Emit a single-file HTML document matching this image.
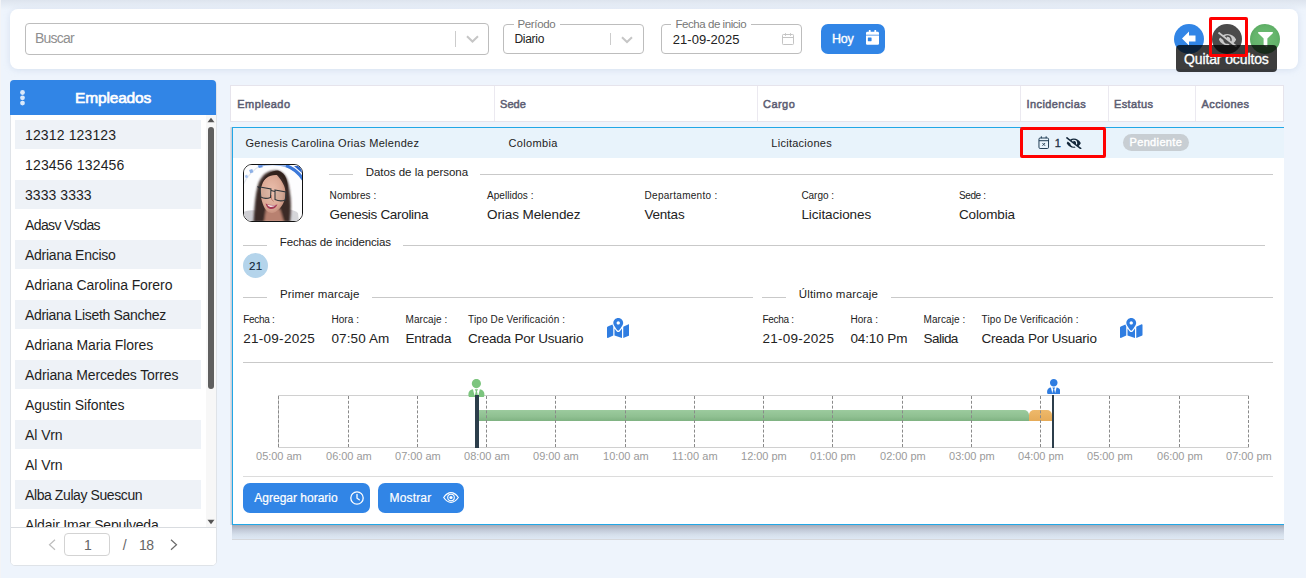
<!DOCTYPE html>
<html lang="es">
<head>
<meta charset="utf-8">
<title>Incidencias</title>
<style>
*{box-sizing:border-box;margin:0;padding:0}
html,body{width:1306px;height:578px;overflow:hidden}
body{position:relative;background:#eef4fc;font-family:"Liberation Sans",sans-serif;color:#222;font-size:13px}
.a{position:absolute}
.t{position:absolute;white-space:nowrap;line-height:1}
.inp{border:1px solid #bdbdbd;border-radius:4px;background:#fff}
.li{position:absolute;left:15px;width:186px;height:29px;background:#eef2f7}
.vsep{position:absolute;top:86px;width:1px;height:35px;background:#ebe9f0}
.hl{position:absolute;height:1px;background:#c9c9c9}
.hr{position:absolute;top:396px;width:0;height:51px;border-left:1px dashed #8a8a8a}
.btn{position:absolute;top:483px;height:30px;background:#3185e6;border-radius:7px}
</style>
</head>
<body>
<div class="a" style="left:0;top:0;width:1306px;height:10px;background:linear-gradient(#dde4ee,#eef4fc)"></div>
<div class="a" style="left:0;top:0;width:1px;height:578px;background:#f3f4f7"></div>
<div class="a" style="left:10px;top:9px;width:1288px;height:60px;background:#fff;border-radius:8px;box-shadow:0 1px 6px rgba(170,190,220,.35)"></div>
<div class="a inp" style="left:25px;top:23px;width:464px;height:32px"></div>
<div class="t" style="left:35.0px;top:30.9px;font-size:14px;color:#8f8f8f;letter-spacing:-0.78px;">Buscar</div>
<div class="a" style="left:455px;top:31px;width:1px;height:16px;background:#ccc"></div>
<svg class="a" style="left:466px;top:35px" width="13" height="8" viewBox="0 0 13 8"><path d="M1 1.200 L6.500 6.500 L12 1.200" fill="none" stroke="#c6c6c6" stroke-width="2"/></svg>
<div class="a inp" style="left:503px;top:24px;width:141px;height:30px"></div>
<div class="a" style="left:514px;top:23px;width:46px;height:3px;background:#fff"></div>
<div class="t" style="left:517.5px;top:18.5px;font-size:11.5px;color:#777;letter-spacing:-0.35px;">Período</div>
<div class="t" style="left:514.5px;top:33.1px;font-size:12px;color:#222;letter-spacing:-0.30px;">Diario</div>
<div class="a" style="left:610px;top:33px;width:1px;height:12px;background:#ccc"></div>
<svg class="a" style="left:621px;top:36px" width="12" height="8" viewBox="0 0 12 8"><path d="M1 1.200 L6 6 L11 1.200" fill="none" stroke="#c6c6c6" stroke-width="2"/></svg>
<div class="a inp" style="left:661px;top:24px;width:141px;height:30px"></div>
<div class="a" style="left:671px;top:23px;width:80px;height:3px;background:#fff"></div>
<div class="t" style="left:675.5px;top:18.5px;font-size:11.5px;color:#777;letter-spacing:-0.45px;">Fecha de inicio</div>
<div class="t" style="left:672.8px;top:32.6px;font-size:13px;color:#222;letter-spacing:0.02px;">21-09-2025</div>
<svg class="a" style="left:781px;top:32px" width="14" height="14" viewBox="0 0 14 14"><rect x="1.500" y="2.500" width="11" height="10" rx=".8" fill="none" stroke="#c4c4c4" stroke-width="1"/><path d="M1.500 5.500H12.500M4.500 1.200V3.800M9.500 1.200V3.800" stroke="#c4c4c4" stroke-width="1" fill="none"/></svg>
<div class="a" style="left:821px;top:24px;width:64px;height:30px;background:#3185e6;border-radius:7px"></div>
<div class="t" style="left:832.0px;top:32.9px;font-size:12.5px;color:#fff;letter-spacing:-0.29px;-webkit-text-stroke:.35px #fff;">Hoy</div>
<svg class="a" style="left:866px;top:30.300px" width="13" height="14.860" viewBox="0 0 448 512"><path d="M0 464c0 26.500 21.500 48 48 48h352c26.500 0 48-21.500 48-48V192H0v272zm64-192c0-8.800 7.200-16 16-16h96c8.800 0 16 7.200 16 16v96c0 8.800-7.200 16-16 16H80c-8.800 0-16-7.200-16-16v-96zM400 64h-48V16c0-8.800-7.200-16-16-16h-32c-8.800 0-16 7.200-16 16v48H160V16c0-8.800-7.200-16-16-16h-32c-8.800 0-16 7.200-16 16v48H48C21.500 64 0 85.500 0 112v48h448v-48c0-26.500-21.500-48-48-48z" fill="#fff"/></svg>
<div class="a" style="left:1174px;top:24px;width:30px;height:30px;border-radius:50%;background:#3185e6"></div>
<div class="a" style="left:1212px;top:24px;width:30px;height:30px;border-radius:50%;background:#4b4b4b"></div>
<div class="a" style="left:1250px;top:24px;width:30px;height:30px;border-radius:50%;background:radial-gradient(circle at 50% 50%,#6ebd74 0,#64b46b 55%,#4f9f58 100%)"></div>
<svg class="a" style="left:1182px;top:31px" width="14" height="15" viewBox="0 0 14 15"><path d="M0 7.500 L7 0.500 V4.500 H13.500 V10.500 H7 V14.500 Z" fill="#fff"/></svg>
<svg class="a" style="left:1217.500px;top:31.500px" width="19" height="15.200" viewBox="0 0 640 512"><path d="M320 400c-75.850 0-137.250-58.710-142.900-133.110L72.200 185.820c-13.790 17.300-26.480 35.590-36.720 55.590a32.350 32.350 0 0 0 0 29.190C89.710 376.410 197.070 448 320 448c26.910 0 52.870-4 77.890-10.460L346 397.390a144.130 144.130 0 0 1-26 2.610zm313.820 58.100l-110.550-85.440a331.250 331.250 0 0 0 81.250-102.070 32.350 32.350 0 0 0 0-29.190C550.290 135.590 442.930 64 320 64a308.150 308.150 0 0 0-147.320 37.700L45.460 3.370A16 16 0 0 0 23 6.180L3.370 31.450A16 16 0 0 0 6.180 53.900l588.360 454.730a16 16 0 0 0 22.460-2.810l19.640-25.270a16 16 0 0 0-2.820-22.450zm-183.720-142l-39.300-30.380A94.750 94.750 0 0 0 416 256a94.760 94.760 0 0 0-121.310-92.210A47.650 47.650 0 0 1 304 192a46.640 46.640 0 0 1-1.540 10l-73.610-56.890A142.310 142.310 0 0 1 320 112a143.920 143.920 0 0 1 144 144c0 21.630-5.290 41.790-13.900 60.110z" fill="#c9c9c9"/></svg>
<svg class="a" style="left:1257.500px;top:32px" width="15" height="15" viewBox="0 0 512 512"><path d="M487.976 0H24.028C2.710 0-8.047 25.866 7.058 40.971L192 225.941V432c0 7.831 3.821 15.170 10.237 19.662l80 55.980C298.020 518.690 320 507.493 320 487.980V225.941l184.947-184.970C520.021 25.896 509.338 0 487.976 0z" fill="#fff"/></svg>
<div class="a" style="left:10px;top:80px;width:207px;height:486px;background:#fff;border:1px solid #dfe3e8;border-radius:5px"></div>
<div class="a" style="left:206px;top:115px;width:10px;height:412px;background:#f7f7f7"></div>
<div class="a" style="left:10px;top:80px;width:206px;height:35px;background:#3185e6;border-radius:4px 4px 0 0"></div>
<div class="t" style="left:75.0px;top:90.2px;font-size:15.5px;color:#fff;letter-spacing:-0.16px;-webkit-text-stroke:.65px #fff;">Empleados</div>
<div class="li" style="top:120px"></div>
<div class="t" style="left:25.0px;top:128.3px;font-size:14px;color:#1f1f1f;letter-spacing:0.14px;">12312 123123</div>
<div class="t" style="left:25.0px;top:158.3px;font-size:14px;color:#1f1f1f;letter-spacing:0.17px;">123456 132456</div>
<div class="li" style="top:180px"></div>
<div class="t" style="left:25.0px;top:188.3px;font-size:14px;color:#1f1f1f;letter-spacing:0.06px;">3333 3333</div>
<div class="t" style="left:25.0px;top:218.3px;font-size:14px;color:#1f1f1f;letter-spacing:-0.61px;">Adasv Vsdas</div>
<div class="li" style="top:240px"></div>
<div class="t" style="left:25.0px;top:248.3px;font-size:14px;color:#1f1f1f;letter-spacing:-0.26px;">Adriana Enciso</div>
<div class="t" style="left:25.0px;top:278.3px;font-size:14px;color:#1f1f1f;letter-spacing:-0.09px;">Adriana Carolina Forero</div>
<div class="li" style="top:300px"></div>
<div class="t" style="left:25.0px;top:308.3px;font-size:14px;color:#1f1f1f;letter-spacing:-0.32px;">Adriana Liseth Sanchez</div>
<div class="t" style="left:25.0px;top:338.3px;font-size:14px;color:#1f1f1f;letter-spacing:-0.09px;">Adriana Maria Flores</div>
<div class="li" style="top:360px"></div>
<div class="t" style="left:25.0px;top:368.3px;font-size:14px;color:#1f1f1f;letter-spacing:-0.12px;">Adriana Mercedes Torres</div>
<div class="t" style="left:25.0px;top:398.3px;font-size:14px;color:#1f1f1f;letter-spacing:-0.11px;">Agustin Sifontes</div>
<div class="li" style="top:420px"></div>
<div class="t" style="left:25.0px;top:428.3px;font-size:14px;color:#1f1f1f;letter-spacing:-0.00px;">Al Vrn</div>
<div class="t" style="left:25.0px;top:458.3px;font-size:14px;color:#1f1f1f;letter-spacing:-0.00px;">Al Vrn</div>
<div class="li" style="top:480px"></div>
<div class="t" style="left:25.0px;top:488.3px;font-size:14px;color:#1f1f1f;letter-spacing:-0.41px;">Alba Zulay Suescun</div>
<div class="t" style="left:25.0px;top:518.3px;font-size:14px;color:#1f1f1f;letter-spacing:-0.20px;">Aldair Imar Sepulveda</div>
<div class="a" style="left:11px;top:527px;width:205px;height:38px;background:#fff;border-radius:0 0 4px 4px"></div>
<div class="a" style="left:11px;top:527px;width:205px;height:1px;background:#d9dce0"></div>
<svg class="a" style="left:19px;top:89.600px" width="7" height="16" viewBox="0 0 7 16"><circle cx="3.500" cy="2.500" r="2.400" fill="#dbe9fa"/><circle cx="3.500" cy="7.800" r="2.400" fill="#dbe9fa"/><circle cx="3.500" cy="13.100" r="2.400" fill="#dbe9fa"/></svg>
<svg class="a" style="left:207px;top:117px" width="8" height="6" viewBox="0 0 8 6"><path d="M4 .8 L7.500 5.200 H.5Z" fill="#555"/></svg>
<div class="a" style="left:208px;top:127px;width:6px;height:262px;border-radius:3px;background:#5f5f5f"></div>
<svg class="a" style="left:207px;top:519px" width="8" height="6" viewBox="0 0 8 6"><path d="M4 5.200 L7.500 .8 H.5Z" fill="#555"/></svg>
<svg class="a" style="left:48px;top:539px" width="8" height="12" viewBox="0 0 8 12"><path d="M7 .8 L1.500 5.800 L7 10.800" fill="none" stroke="#bdbdbd" stroke-width="1.200"/></svg>
<div class="a" style="left:64px;top:533px;width:46px;height:23px;border:1px solid #d3d3d3;border-radius:4px;background:#fff"></div>
<div class="t" style="left:84.0px;top:538.2px;font-size:14px;color:#666;letter-spacing:-1.30px;">1</div>
<div class="t" style="left:122.7px;top:538.2px;font-size:14px;color:#666;letter-spacing:1.41px;">/</div>
<div class="t" style="left:139.0px;top:538.2px;font-size:14px;color:#666;letter-spacing:-0.65px;">18</div>
<svg class="a" style="left:170px;top:539px" width="8" height="12" viewBox="0 0 8 12"><path d="M1 .8 L6.500 5.800 L1 10.800" fill="none" stroke="#6a6a6a" stroke-width="1.200"/></svg>
<div class="a" style="left:230px;top:127px;width:2px;height:398px;background:linear-gradient(90deg,#e3e8f0,#c3c8d2)"></div><div class="a" style="left:232px;top:525px;width:1052px;height:14px;background:linear-gradient(#a5abb8 0,#c2cad8 35%,#d6e0ec 70%,#dee8f4 100%)"></div><div class="a" style="left:232px;top:539px;width:1052px;height:1px;background:#d6d8dc"></div><div class="a" style="left:232px;top:127px;width:1052px;height:398px;background:#fff;border:1px solid #22a7e6;border-right:none"></div>
<div class="a" style="left:230px;top:85px;width:1054px;height:37px;background:#fff;border:1px solid #e6e4ec"></div>
<div class="vsep" style="left:494px"></div>
<div class="vsep" style="left:757px"></div>
<div class="vsep" style="left:1020px"></div>
<div class="vsep" style="left:1108px"></div>
<div class="vsep" style="left:1195px"></div>
<div class="t" style="left:237.2px;top:98.7px;font-size:11px;color:#5c5d72;letter-spacing:0.47px;-webkit-text-stroke:.5px #5c5d72;">Empleado</div>
<div class="t" style="left:500.0px;top:98.7px;font-size:11px;color:#5c5d72;letter-spacing:0.08px;-webkit-text-stroke:.5px #5c5d72;">Sede</div>
<div class="t" style="left:763.0px;top:98.7px;font-size:11px;color:#5c5d72;letter-spacing:0.45px;-webkit-text-stroke:.5px #5c5d72;">Cargo</div>
<div class="t" style="left:1026.5px;top:98.7px;font-size:11px;color:#5c5d72;letter-spacing:0.42px;-webkit-text-stroke:.5px #5c5d72;">Incidencias</div>
<div class="t" style="left:1114.0px;top:98.7px;font-size:11px;color:#5c5d72;letter-spacing:0.37px;-webkit-text-stroke:.5px #5c5d72;">Estatus</div>
<div class="t" style="left:1201.5px;top:98.7px;font-size:11px;color:#5c5d72;letter-spacing:0.42px;-webkit-text-stroke:.5px #5c5d72;">Acciones</div>
<div class="a" style="left:233px;top:128px;width:1051px;height:30px;background:#e8f3fb"></div>
<div class="t" style="left:245.5px;top:137.8px;font-size:11px;color:#222;letter-spacing:0.30px;">Genesis Carolina Orias Melendez</div>
<div class="t" style="left:508.5px;top:137.8px;font-size:11px;color:#222;letter-spacing:0.34px;">Colombia</div>
<div class="t" style="left:771.3px;top:137.8px;font-size:11px;color:#222;letter-spacing:0.27px;">Licitaciones</div>
<div class="t" style="left:1054.8px;top:137.8px;font-size:11px;color:#1c3144;letter-spacing:-0.42px;-webkit-text-stroke:.3px #1c3144;">1</div>
<div class="a" style="left:1123px;top:134px;width:66px;height:17px;border-radius:9px;background:#c8ced3"></div>
<div class="t" style="left:1129.5px;top:137.4px;font-size:11px;color:#fff;letter-spacing:0.35px;-webkit-text-stroke:.4px #fff;">Pendiente</div>
<div class="a" id="avatar" style="left:243px;top:164px;width:60px;height:58px;border:1px solid #111;border-radius:9px;background:#fff;overflow:hidden">
<svg width="58" height="56" viewBox="0 0 58 56" style="position:absolute;left:0;top:0">
<defs><filter id="bl" x="-10%" y="-10%" width="120%" height="120%"><feGaussianBlur stdDeviation=".55"/></filter>
<filter id="bl2" x="-10%" y="-10%" width="120%" height="120%"><feGaussianBlur stdDeviation=".9"/></filter>
<radialGradient id="skin" cx=".45" cy=".45" r=".6"><stop offset="0" stop-color="#ebc0ae"/><stop offset=".7" stop-color="#dca995"/><stop offset="1" stop-color="#bd8775"/></radialGradient></defs>
<rect width="58" height="56" fill="#fdfdfe"/>
<g filter="url(#bl)">
<path d="M-4 30 A44 44 0 0 1 40 -6" fill="none" stroke="#e3e8f0" stroke-width="1.200"/>
<path d="M14 1 Q30 -3.500 44 1.500 Q54 5.500 59 14" fill="none" stroke="#9bb9ea" stroke-width="2.600"/>
<path d="M42 .5 Q53 4.500 59.500 15" fill="none" stroke="#3a78da" stroke-width="3"/>
<path d="M50 1 L58 8 L58 1Z" fill="#2a63c8"/>
<rect x="5.500" y="4.500" width="3.400" height="3.400" fill="#8db0e6" transform="rotate(-20 7 6)"/>
<rect x="1.200" y="10" width="2.600" height="2.800" fill="#a9c4ee" transform="rotate(-25 2.500 11.500)"/>
<rect x="14.500" y=".5" width="4" height="2.200" fill="#5f8fe0" transform="rotate(-10 16 1.500)"/>
<path d="M-1 47 Q5 44.500 12 45.500 L13 57 L-1 57Z" fill="#cfcfd4"/>
<path d="M44 44.500 Q50 44.500 54 48 L55 57 L43 57Z" fill="#d6d6da"/>
</g>
<g filter="url(#bl2)">
<path d="M33 5.500 C24 4.500 17 10 14 20 C11 30 10.500 44 9.500 57 L46 57 C47 46 47.500 36 45.500 25 C44 14 41 7 33 5.500Z" fill="#3b2a26"/>
<path d="M20 57 L22 44 L36 44 L40 57Z" fill="#b88170"/>
</g>
<g filter="url(#bl)">
<path d="M18 20 C20.500 11 27 8.500 33 10 C38 16 41.500 21 41.500 28 C41.500 36 38 43 31.500 47 C28 49 24.500 48 22 45 C18.500 40.500 16.500 32 16.500 26 C16.500 23 17.500 21 18.500 19Z" fill="url(#skin)"/>
<path d="M34 5.500 C27 5.500 20 10 17 21 C20 13 26 9.300 33 10 C39.500 11 42 18 43 28 C45 18 42 7.500 34 5.500Z" fill="#33231f"/>
<path d="M16 22 L27 24 L26.500 32.500 Q21 34.500 16.800 32Z" fill="#7f908e" fill-opacity=".12" stroke="#2f363a" stroke-width="1.050"/>
<path d="M31 25 L42 27 L41.500 35 Q36 37 31 34.500Z" fill="#7f908e" fill-opacity=".12" stroke="#2f363a" stroke-width="1.050"/>
<path d="M27 25.500 L31 26.500" stroke="#2f363a" stroke-width="1.100" fill="none"/>
<path d="M13.500 21.500 L16.500 23.500" stroke="#262b30" stroke-width="1.200" fill="none"/>
<path d="M27.500 30 Q26.500 35 29.500 36.500" fill="none" stroke="#b57b6b" stroke-width=".9"/>
<path d="M21.500 38.500 Q27 41 33.500 39.500 Q31 44.500 26.500 44 Q23 43.500 21.500 38.500Z" fill="#a43a55"/>
<path d="M23 39.500 Q27.500 41 32 40.200 Q29.500 42.200 26.500 42 Q24.500 41.600 23 39.500Z" fill="#f2e9e8"/>
</g>
</svg></div>
<div class="hl" style="left:329px;top:174px;width:24px"></div>
<div class="t" style="left:365.7px;top:166.6px;font-size:11.5px;color:#222;letter-spacing:-0.03px;">Datos de la persona</div>
<div class="hl" style="left:480px;top:174px;width:793px"></div>
<div class="t" style="left:329.6px;top:190.6px;font-size:10px;color:#222;letter-spacing:0.07px;">Nombres :</div>
<div class="t" style="left:329.6px;top:208.3px;font-size:13.5px;color:#222;letter-spacing:-0.31px;">Genesis Carolina</div>
<div class="t" style="left:487.0px;top:190.6px;font-size:10px;color:#222;letter-spacing:0.03px;">Apellidos :</div>
<div class="t" style="left:487.0px;top:208.3px;font-size:13.5px;color:#222;letter-spacing:-0.08px;">Orias Melendez</div>
<div class="t" style="left:644.6px;top:190.6px;font-size:10px;color:#222;letter-spacing:0.28px;">Departamento :</div>
<div class="t" style="left:644.6px;top:208.3px;font-size:13.5px;color:#222;letter-spacing:-0.25px;">Ventas</div>
<div class="t" style="left:801.4px;top:190.6px;font-size:10px;color:#222;letter-spacing:-0.03px;">Cargo :</div>
<div class="t" style="left:801.4px;top:208.3px;font-size:13.5px;color:#222;letter-spacing:-0.06px;">Licitaciones</div>
<div class="t" style="left:959.0px;top:190.6px;font-size:10px;color:#222;letter-spacing:-0.39px;">Sede :</div>
<div class="t" style="left:959.0px;top:208.3px;font-size:13.5px;color:#222;letter-spacing:-0.14px;">Colombia</div>
<div class="hl" style="left:243px;top:245px;width:24px"></div>
<div class="t" style="left:279.8px;top:237.4px;font-size:11.5px;color:#222;letter-spacing:-0.13px;">Fechas de incidencias</div>
<div class="hl" style="left:403px;top:245px;width:862px"></div>
<div class="a" style="left:243px;top:253px;width:25px;height:25px;border-radius:50%;background:#b4d4eb"></div>
<div class="t" style="left:248.9px;top:260.5px;font-size:11.5px;color:#12273b;letter-spacing:0.40px;-webkit-text-stroke:.15px #12273b;">21</div>
<div class="hl" style="left:243px;top:297px;width:24px"></div>
<div class="t" style="left:280.0px;top:289.2px;font-size:11.5px;color:#222;letter-spacing:0.11px;">Primer marcaje</div>
<div class="hl" style="left:372px;top:297px;width:381px"></div>
<div class="t" style="left:243.3px;top:315.1px;font-size:10px;color:#222;letter-spacing:-0.32px;">Fecha :</div>
<div class="t" style="left:243.3px;top:331.8px;font-size:13.5px;color:#222;letter-spacing:0.26px;">21-09-2025</div>
<div class="t" style="left:331.4px;top:315.1px;font-size:10px;color:#222;letter-spacing:0.07px;">Hora :</div>
<div class="t" style="left:331.4px;top:331.8px;font-size:13.5px;color:#222;letter-spacing:0.13px;">07:50 Am</div>
<div class="t" style="left:405.5px;top:315.1px;font-size:10px;color:#222;letter-spacing:0.08px;">Marcaje :</div>
<div class="t" style="left:405.5px;top:331.8px;font-size:13.5px;color:#222;letter-spacing:-0.23px;">Entrada</div>
<div class="t" style="left:468.0px;top:315.1px;font-size:10px;color:#222;letter-spacing:0.14px;">Tipo De Verificación :</div>
<div class="t" style="left:468.0px;top:331.8px;font-size:13.5px;color:#222;letter-spacing:-0.23px;">Creada Por Usuario</div>
<div class="hl" style="left:762px;top:297px;width:24px"></div>
<div class="t" style="left:798.7px;top:289.2px;font-size:11.5px;color:#222;letter-spacing:0.20px;">Último marcaje</div>
<div class="hl" style="left:891px;top:297px;width:382px"></div>
<div class="t" style="left:762.5px;top:315.1px;font-size:10px;color:#222;letter-spacing:-0.32px;">Fecha :</div>
<div class="t" style="left:762.5px;top:331.8px;font-size:13.5px;color:#222;letter-spacing:0.26px;">21-09-2025</div>
<div class="t" style="left:850.4px;top:315.1px;font-size:10px;color:#222;letter-spacing:0.07px;">Hora :</div>
<div class="t" style="left:850.4px;top:331.8px;font-size:13.5px;color:#222;letter-spacing:-0.11px;">04:10 Pm</div>
<div class="t" style="left:923.5px;top:315.1px;font-size:10px;color:#222;letter-spacing:0.08px;">Marcaje :</div>
<div class="t" style="left:923.5px;top:331.8px;font-size:13.5px;color:#222;letter-spacing:-0.53px;">Salida</div>
<div class="t" style="left:981.5px;top:315.1px;font-size:10px;color:#222;letter-spacing:0.14px;">Tipo De Verificación :</div>
<div class="t" style="left:981.5px;top:331.8px;font-size:13.5px;color:#222;letter-spacing:-0.23px;">Creada Por Usuario</div>
<div class="hl" style="left:243px;top:362px;width:1030px"></div>
<svg class="a" style="left:606.500px;top:318.100px" width="22.500" height="20" viewBox="0 0 576 512"><path d="M288 0c-69.590 0-126 56.410-126 126 0 56.260 82.350 158.800 113.900 196.020 6.390 7.540 17.820 7.540 24.200 0C331.650 284.800 414 182.260 414 126 414 56.410 357.590 0 288 0zm0 168c-23.200 0-42-18.800-42-42s18.800-42 42-42 42 18.800 42 42-18.800 42-42 42zM20.120 215.950A32.006 32.006 0 0 0 0 245.660v250.320c0 11.320 11.430 19.060 21.940 14.860L160 448V214.920c-8.840-15.980-16.070-31.540-21.250-46.420L20.120 215.950zM288 359.670c-14.070 0-27.380-6.180-36.510-16.960-19.660-23.200-40.570-49.620-59.490-76.720v182l192 64V266c-18.920 27.090-39.820 53.520-59.490 76.720-9.130 10.770-22.440 16.950-36.510 16.950zm266.060-198.510L416 224v288l139.880-55.950A31.996 31.996 0 0 0 576 426.340V176.020c0-11.320-11.430-19.060-21.940-14.860z" fill="#2f7de1"/></svg>
<svg class="a" style="left:1120px;top:318.100px" width="22.500" height="20" viewBox="0 0 576 512"><path d="M288 0c-69.590 0-126 56.410-126 126 0 56.260 82.350 158.800 113.900 196.020 6.390 7.540 17.820 7.540 24.200 0C331.650 284.800 414 182.260 414 126 414 56.410 357.590 0 288 0zm0 168c-23.200 0-42-18.800-42-42s18.800-42 42-42 42 18.800 42 42-18.800 42-42 42zM20.120 215.950A32.006 32.006 0 0 0 0 245.660v250.320c0 11.320 11.430 19.060 21.940 14.860L160 448V214.920c-8.840-15.980-16.070-31.540-21.250-46.420L20.120 215.950zM288 359.670c-14.070 0-27.380-6.180-36.510-16.960-19.660-23.200-40.570-49.620-59.490-76.720v182l192 64V266c-18.920 27.090-39.820 53.520-59.490 76.720-9.130 10.770-22.440 16.950-36.510 16.950zm266.060-198.510L416 224v288l139.880-55.950A31.996 31.996 0 0 0 576 426.340V176.020c0-11.320-11.430-19.060-21.940-14.860z" fill="#2f7de1"/></svg>
<div class="a" style="left:278px;top:395px;width:971px;height:53px;border:1px solid #d0d0d0;border-right:none"></div>
<div class="a" style="left:479px;top:410px;width:550px;height:11px;background:linear-gradient(#9ccb9e,#8fc091 60%,#7fb282);border-radius:0 5px 0 0"></div>
<div class="a" style="left:1029px;top:410px;width:23px;height:11px;background:linear-gradient(#eeb96b,#e6ab58);border-radius:5px 5px 0 0"></div>
<div class="hr" style="left:278px"></div>
<div class="t" style="left:256.1px;top:450.6px;font-size:11px;color:#9a9a9a;letter-spacing:-0.05px;">05:00 am</div>
<div class="hr" style="left:348px"></div>
<div class="t" style="left:326.1px;top:450.6px;font-size:11px;color:#9a9a9a;letter-spacing:-0.05px;">06:00 am</div>
<div class="hr" style="left:417px"></div>
<div class="t" style="left:395.1px;top:450.6px;font-size:11px;color:#9a9a9a;letter-spacing:-0.05px;">07:00 am</div>
<div class="hr" style="left:486px"></div>
<div class="t" style="left:464.1px;top:450.6px;font-size:11px;color:#9a9a9a;letter-spacing:-0.05px;">08:00 am</div>
<div class="hr" style="left:555px"></div>
<div class="t" style="left:533.1px;top:450.6px;font-size:11px;color:#9a9a9a;letter-spacing:-0.05px;">09:00 am</div>
<div class="hr" style="left:625px"></div>
<div class="t" style="left:603.1px;top:450.6px;font-size:11px;color:#9a9a9a;letter-spacing:-0.05px;">10:00 am</div>
<div class="hr" style="left:694px"></div>
<div class="t" style="left:672.1px;top:450.6px;font-size:11px;color:#9a9a9a;letter-spacing:0.06px;">11:00 am</div>
<div class="hr" style="left:763px"></div>
<div class="t" style="left:741.1px;top:450.6px;font-size:11px;color:#9a9a9a;letter-spacing:-0.05px;">12:00 pm</div>
<div class="hr" style="left:832px"></div>
<div class="t" style="left:810.1px;top:450.6px;font-size:11px;color:#9a9a9a;letter-spacing:-0.05px;">01:00 pm</div>
<div class="hr" style="left:902px"></div>
<div class="t" style="left:880.1px;top:450.6px;font-size:11px;color:#9a9a9a;letter-spacing:-0.05px;">02:00 pm</div>
<div class="hr" style="left:971px"></div>
<div class="t" style="left:949.1px;top:450.6px;font-size:11px;color:#9a9a9a;letter-spacing:-0.05px;">03:00 pm</div>
<div class="hr" style="left:1040px"></div>
<div class="t" style="left:1018.1px;top:450.6px;font-size:11px;color:#9a9a9a;letter-spacing:-0.05px;">04:00 pm</div>
<div class="hr" style="left:1109px"></div>
<div class="t" style="left:1087.1px;top:450.6px;font-size:11px;color:#9a9a9a;letter-spacing:-0.05px;">05:00 pm</div>
<div class="hr" style="left:1179px"></div>
<div class="t" style="left:1157.1px;top:450.6px;font-size:11px;color:#9a9a9a;letter-spacing:-0.05px;">06:00 pm</div>
<div class="hr" style="left:1248px"></div>
<div class="t" style="left:1226.1px;top:450.6px;font-size:11px;color:#9a9a9a;letter-spacing:-0.05px;">07:00 pm</div>
<svg class="a" style="left:468.300px;top:378.800px" width="16.800" height="18.300" viewBox="0 0 448 512"><path d="M224 256c70.700 0 128-57.300 128-128S294.700 0 224 0 96 57.300 96 128s57.300 128 128 128zm95.800 32.600L272 480l-32-136 32-56h-96l32 56-32 136-47.800-191.400C56.900 292 0 350.300 0 422.400V464c0 26.500 21.500 48 48 48h352c26.500 0 48-21.500 48-48v-41.600c0-72.100-56.900-130.400-128.200-133.800z" fill="#7cc57e"/></svg>
<svg class="a" style="left:1046.600px;top:378.800px" width="13.500" height="15.200" viewBox="0 0 448 512"><path d="M224 256c70.700 0 128-57.300 128-128S294.700 0 224 0 96 57.300 96 128s57.300 128 128 128zm95.800 32.600L272 480l-32-136 32-56h-96l32 56-32 136-47.800-191.400C56.900 292 0 350.300 0 422.400V464c0 26.500 21.500 48 48 48h352c26.500 0 48-21.500 48-48v-41.600c0-72.100-56.900-130.400-128.200-133.800z" fill="#2f7de1"/></svg>
<div class="a" style="left:475px;top:395px;width:4px;height:53px;background:#2c3e4b"></div>
<div class="a" style="left:1052px;top:395px;width:2px;height:53px;background:#2c3e4b"></div>
<div class="hl" style="left:243px;top:476px;width:1030px;background:#dcdcdc"></div>
<div class="btn" style="left:243px;width:127px"></div>
<div class="btn" style="left:378px;width:86px"></div>
<div class="t" style="left:254.3px;top:491.9px;font-size:12px;color:#fff;letter-spacing:0.00px;-webkit-text-stroke:.2px #fff;">Agregar horario</div>
<div class="t" style="left:389.5px;top:491.9px;font-size:12px;color:#fff;letter-spacing:0.16px;-webkit-text-stroke:.2px #fff;">Mostrar</div>
<svg class="a" style="left:350px;top:491px" width="14" height="14" viewBox="0 0 14 14"><circle cx="7" cy="7" r="6.200" fill="none" stroke="#fff" stroke-width="1.300"/><path d="M7 3.300V7.200L9.300 8.800" fill="none" stroke="#fff" stroke-width="1.300" stroke-linecap="round"/></svg>
<svg class="a" style="left:443px;top:492px" width="16" height="11" viewBox="0 0 16 11"><path d="M.7 5.500 Q4 .7 8 .7 T15.300 5.500 Q12 10.300 8 10.300 T.7 5.500Z" fill="none" stroke="#fff" stroke-width="1.200"/><circle cx="8" cy="5.500" r="3.300" fill="none" stroke="#fff" stroke-width="1.100"/><circle cx="8" cy="5.500" r="1.600" fill="#fff"/></svg>
<svg class="a" style="left:1038px;top:136px" width="11.500" height="13" viewBox="0 0 12 13" preserveAspectRatio="none"><rect x="1" y="2" width="10" height="10.500" rx="1.200" fill="none" stroke="#1e3a52" stroke-width="1"/><path d="M1 4.700H11M3.500 .3V2.200M8.500 .3V2.200" stroke="#1e3a52" stroke-width="1" fill="none"/><path d="M4.600 7L7.400 9.800M7.400 7L4.600 9.800" stroke="#1e3a52" stroke-width=".9" fill="none"/></svg>
<svg class="a" style="left:1066px;top:136.500px" width="15.500" height="12.400" viewBox="0 0 640 512"><path d="M320 400c-75.850 0-137.250-58.710-142.900-133.110L72.200 185.820c-13.790 17.300-26.480 35.590-36.720 55.590a32.350 32.350 0 0 0 0 29.190C89.710 376.410 197.070 448 320 448c26.910 0 52.870-4 77.890-10.460L346 397.390a144.130 144.130 0 0 1-26 2.610zm313.820 58.100l-110.550-85.440a331.250 331.250 0 0 0 81.250-102.070 32.350 32.350 0 0 0 0-29.190C550.290 135.590 442.930 64 320 64a308.150 308.150 0 0 0-147.320 37.700L45.460 3.370A16 16 0 0 0 23 6.180L3.370 31.450A16 16 0 0 0 6.180 53.900l588.360 454.730a16 16 0 0 0 22.460-2.810l19.640-25.270a16 16 0 0 0-2.820-22.450zm-183.720-142l-39.300-30.380A94.750 94.750 0 0 0 416 256a94.760 94.760 0 0 0-121.310-92.210A47.650 47.650 0 0 1 304 192a46.640 46.640 0 0 1-1.540 10l-73.610-56.890A142.310 142.310 0 0 1 320 112a143.920 143.920 0 0 1 144 144c0 21.630-5.290 41.790-13.900 60.110z" fill="#13273a"/></svg>
<div class="a" style="left:1176px;top:45px;width:101px;height:27px;border-radius:4px;background:rgba(0,0,0,.76)"></div>
<div class="t" style="left:1184.0px;top:51.5px;font-size:14px;color:#fff;letter-spacing:-0.12px;-webkit-text-stroke:.3px #fff;">Quitar ocultos</div>
<div class="a" style="left:1209px;top:17px;width:39px;height:40px;border:3px solid #f00;border-radius:2px"></div>
<div class="a" style="left:1020px;top:127px;width:86px;height:31px;border:3px solid #f00;border-radius:2px"></div>
</body>
</html>
